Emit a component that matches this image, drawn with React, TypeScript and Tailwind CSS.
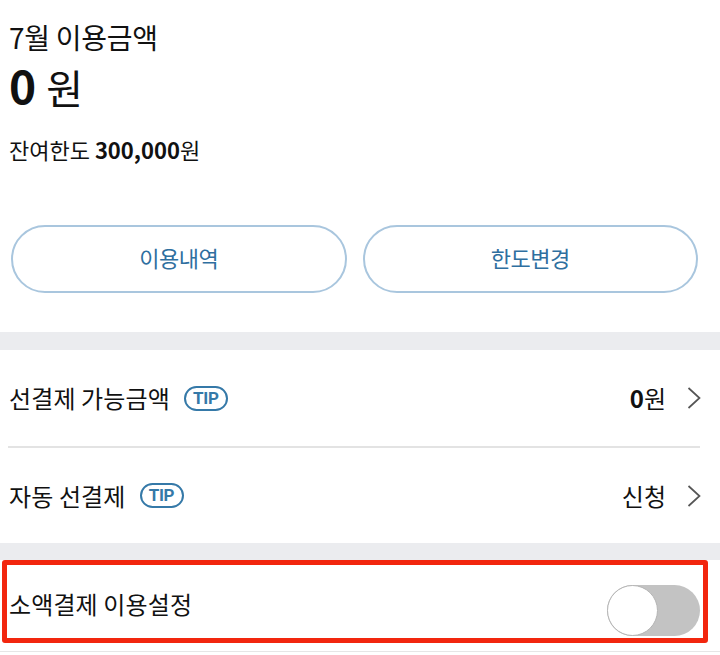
import { useState } from "react";

function Chevron() {
  return (
    <svg width="14" height="22" viewBox="0 0 14 22" fill="none" className="shrink-0">
      <polyline points="1.5,1 12.5,11 1.5,21" stroke="#555" strokeWidth="1.7" strokeLinejoin="miter" />
    </svg>
  );
}

function Tip() {
  return (
    <span className="inline-flex items-center justify-center w-[44px] h-[25px] rounded-full border-2 border-[#3579a8] text-[#3579a8] font-['Roboto',sans-serif] font-bold text-[17px] leading-none tracking-[-0.3px]">
      TIP
    </span>
  );
}

function LinkRow({ label, value, h }: { label: string; value: React.ReactNode; h: string }) {
  return (
    <div className={`${h} flex items-center justify-between pl-[9px] pr-[19px]`}>
      <div className="flex items-center gap-[14px]">
        <span className="text-[24px] tracking-[0.005em] text-[#111]">{label}</span>
        <Tip />
      </div>
      <div className="flex items-center gap-[21px]">
        <span className="text-[24px] text-[#111]">{value}</span>
        <Chevron />
      </div>
    </div>
  );
}

export default function App() {
  const [on, setOn] = useState(false);

  return (
    <main className="w-[720px] h-[655px] overflow-hidden bg-white font-['Noto_Sans_CJK_KR','Noto_Sans',sans-serif] text-[#111]">
      <section className="pt-[18px] pb-[39px]">
        <div className="pl-[9px]">
          <p className="text-[28px] leading-[38px] tracking-[-0.01em]">7월 이용금액</p>
          <p className="leading-[56px] flex items-baseline">
            <span className="text-[46px] font-bold">0</span>
            <span className="text-[40px] ml-[10px]">원</span>
          </p>
          <p className="mt-[18px] text-[22px] leading-[32px]">
            잔여한도 <b className="font-bold">300,000</b>원
          </p>
        </div>
        <div className="mt-[60px] pl-[11px] pr-[22px] flex gap-[16px]">
          <button className="flex-1 h-[68px] pb-[4px] rounded-full border-2 border-[#a9c6de] text-[#2f6f9f] text-[22px] tracking-[-0.02em]">
            이용내역
          </button>
          <button className="flex-1 h-[68px] pb-[4px] rounded-full border-2 border-[#a9c6de] text-[#2f6f9f] text-[22px] tracking-[-0.02em]">
            한도변경
          </button>
        </div>
      </section>

      <div className="h-[18px] bg-[#ebecef]" />

      <LinkRow h="h-[96px]" label="선결제 가능금액" value={<><b className="font-bold">0</b>원</>} />
      <div className="ml-[8px] mr-[20px] h-[2px] bg-[#e3e3e3]" />
      <LinkRow h="h-[95px]" label="자동 선결제" value="신청" />

      <div className="h-[17px] bg-[#ebecef]" />

      <div className="relative h-[92px] border-b border-[#e6e6e6] flex items-center justify-between pl-[9px] pr-[20px]">
        <span className="text-[24px] tracking-[0.005em] -mt-[4px]">소액결제 이용설정</span>
        <button
          onClick={() => setOn(!on)}
          className={`mt-[9px] w-[93px] h-[51px] rounded-full flex items-center ${on ? "bg-[#3579a8] justify-end" : "bg-[#c3c3c3] justify-start"}`}
        >
          <span className="w-[51px] h-[51px] rounded-full bg-white border border-[#b5b5b5]" />
        </button>
        <div className="absolute left-[2px] top-0 w-[706px] h-[83px] border-[5px] border-[#f2260e] rounded-[3px] pointer-events-none" />
      </div>
    </main>
  );
}
